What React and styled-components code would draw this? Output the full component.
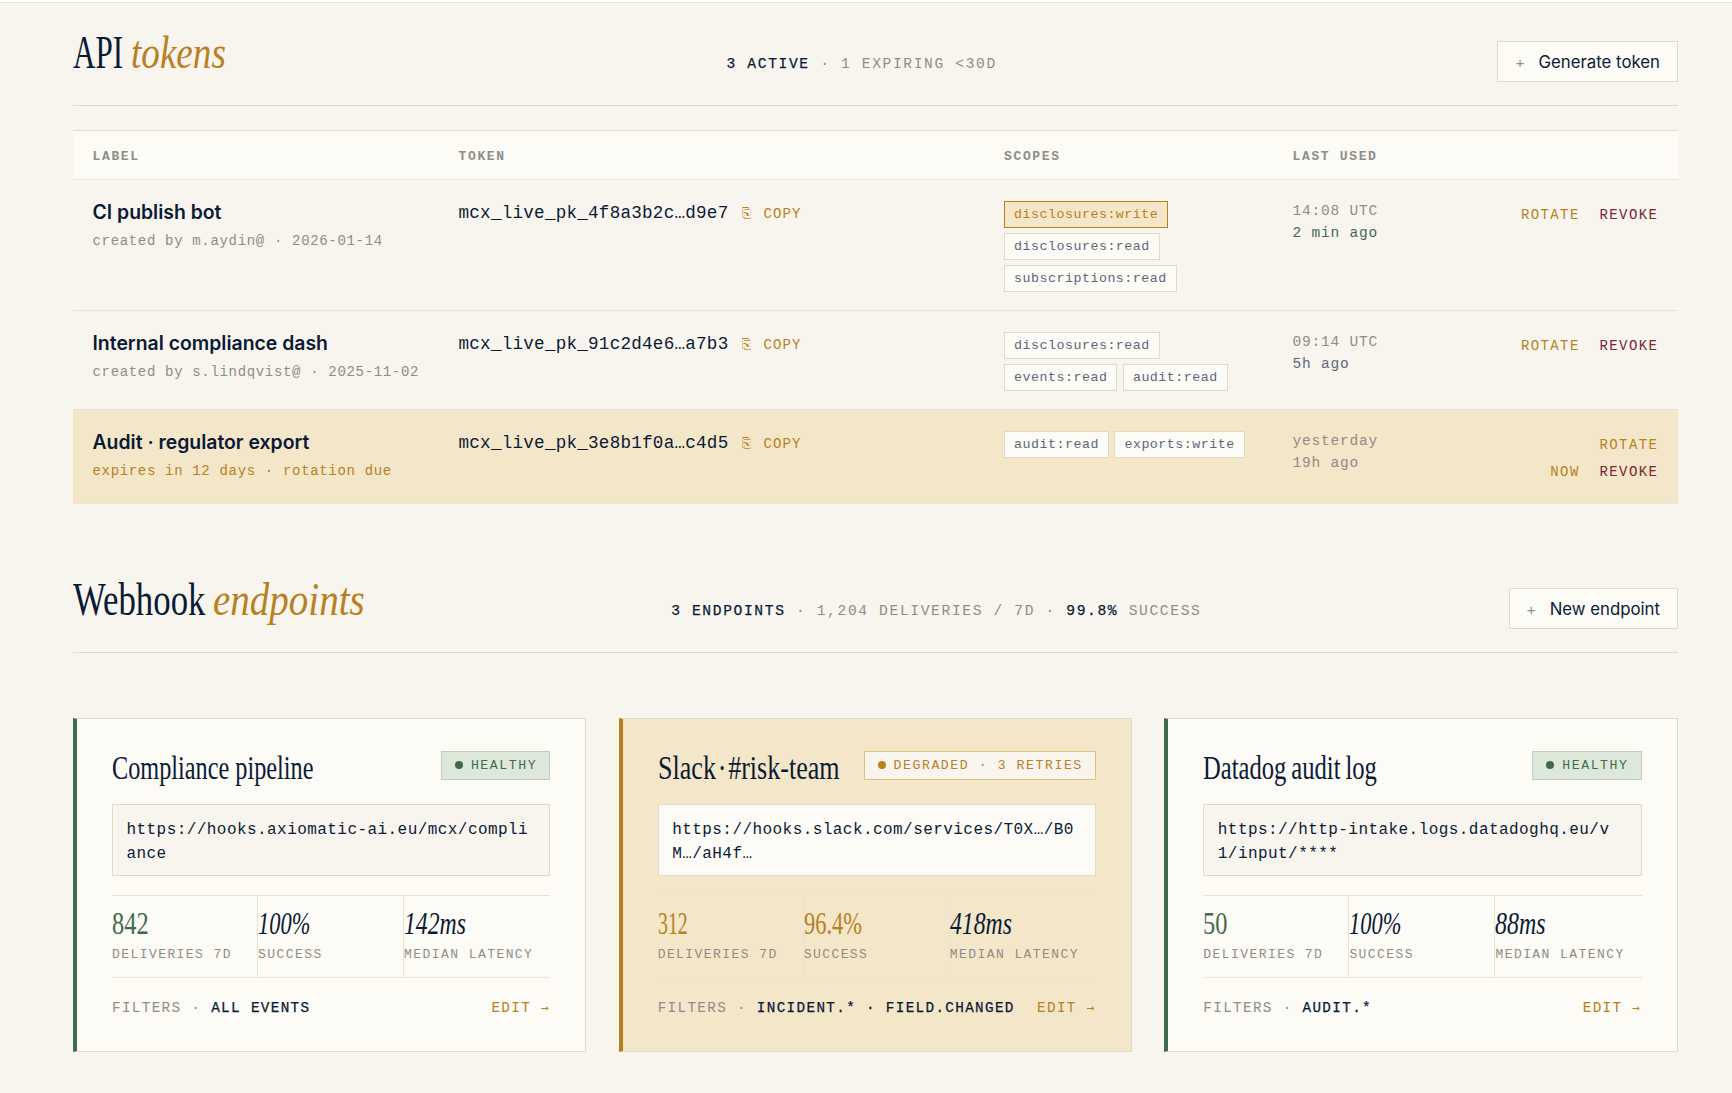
import React from 'react'
import styled, { createGlobalStyle } from 'styled-components'

const ink = '#0a1a35'
const amber = '#b8801f'
const amberSoft = '#f4e6c9'
const green = '#3f6b4c'
const red = '#7a2436'
const muted = '#8e8d86'
const slate = '#5d667c'
const page = '#f8f5ee'
const paper = '#fcfbf6'
const line = '#e1dac9'
const lineSoft = '#e9e3d5'

const mono = `'Liberation Mono', 'DejaVu Sans Mono', monospace`
const serif = `'Liberation Serif', serif`
const sans = `Inter, 'Liberation Sans', sans-serif`

const GlobalStyle = createGlobalStyle`
  * {
    box-sizing: border-box;
  }

  body {
    margin: 0;
    background: ${page};
    color: ${ink};
    font-family: ${sans};
  }
`

const Page = styled.main`
  height: 1093px;
  overflow: hidden;
  padding: 0 54.5px 0 73px;
  border-top: 2px solid #fff;
  box-shadow: inset 0 1px 0 #e9e7e2;
`

const SectionHead = styled.header`
  display: flex;
  justify-content: space-between;
  align-items: baseline;
  height: ${p => p.$height}px;
  padding-top: ${p => p.$top}px;
  border-bottom: 1px solid ${line};
`

const Title = styled.h2`
  display: flex;
  gap: ${p => p.$gap}px;
  margin: 0;
  font: 400 47px/47px ${serif};
`

const Narrow = styled.span`
  display: inline-block;
  width: ${p => p.$width ? `${p.$width}px` : 'auto'};
  white-space: nowrap;
  word-spacing: ${p => p.$words || 0}px;
  transform: scaleX(${p => p.$squeeze});
  transform-origin: 0 50%;
  color: ${p => p.$color || 'inherit'};
  font-style: ${p => p.$italic ? 'italic' : 'normal'};
`

// medium weight, between the regular and bold cuts of the mono
const Strong = styled.b`
  color: ${ink};
  font-weight: 400;
  -webkit-text-stroke: 0.25px ${ink};
`

const Summary = styled.div`
  color: ${muted};
  font: 14.6px/22px ${mono};
  letter-spacing: 1.64px;
  white-space: pre;
`

const Button = styled.button`
  display: flex;
  align-items: baseline;
  gap: 14px;
  height: 41px;
  padding: 9px 16.5px 0 17px;
  border: 1px solid ${line};
  background: ${paper};
  color: ${ink};
  font: 400 16.8px/22px ${sans};

  span {
    color: ${muted};
    font: 15px/22px ${mono};
  }
`

const Table = styled.div`
  margin: 24px 0 71px;
  border-top: 1px solid ${line};
`

const Row = styled.div`
  display: grid;
  grid-template-columns: 366px 545.5px 288.5px 176px 1fr;
  min-height: ${p => p.$head ? 49 : 94}px;
  padding-left: 19.5px;
  border-bottom: 1px solid ${lineSoft};
  background: ${p => p.$head ? paper : p.$warn ? amberSoft : 'transparent'};
`

const HeadCell = styled.div`
  padding-top: 16px;
  color: ${muted};
  font: 700 13px/20px ${mono};
  letter-spacing: 1.65px;
`

const Cell = styled.div`
  padding: 20px 20px 18.5px 0;
`

const Label = styled.div`
  padding-top: 1px;
  font: 600 19.4px/23.6px ${sans};
`

const Meta = styled.div`
  margin-top: 4.5px;
  color: ${p => p.$warn ? amber : muted};
  font: 14px/24px ${mono};
  letter-spacing: 0.67px;
  white-space: nowrap;
`

const Token = styled.div`
  display: flex;
  align-items: baseline;
  font: 17.6px/27px ${mono};
  letter-spacing: 0.24px;
`

const Copy = styled.span`
  margin-left: 14px;
  color: ${amber};
  font: 14px/20px ${mono};
  letter-spacing: 1.1px;
  white-space: pre;
`

const CopyGlyph = styled.span`
  display: inline-block;
  width: 11.5px;
  transform: scaleX(0.8);
  transform-origin: 0 50%;
`

const Scopes = styled.div`
  display: flex;
  flex-wrap: wrap;
  gap: 5px 5.5px;
  padding-top: 0.5px;
`

const Scope = styled.span`
  height: 27px;
  padding: 0.5px 9px 0;
  border: 1px solid ${p => p.$hot ? amber : line};
  background: ${p => p.$hot ? amberSoft : paper};
  color: ${p => p.$hot ? amber : slate};
  font: 13.3px/25px ${mono};
  letter-spacing: 0.51px;
`

const Used = styled.div`
  color: ${p => p.$color || muted};
  font: 14.5px/22.4px ${mono};
  letter-spacing: 0.8px;
`

const Actions = styled.div`
  padding: 21.5px 19.2px 17px 14px;
  font: 14px/27px ${mono};
  letter-spacing: 1.4px;
  text-align: right;
`

const Action = styled.a`
  margin-left: 10px;
  color: ${p => p.$danger ? red : amber};
`

const Cards = styled.div`
  display: grid;
  grid-template-columns: repeat(3, 1fr);
  gap: 32.5px;
  margin-top: 65px;
`

const Card = styled.article`
  height: 334px;
  padding: 32px 35px 0;
  border: 1px solid ${line};
  border-left: 4px solid ${p => p.$warn ? amber : green};
  background: ${p => p.$warn ? amberSoft : paper};
`

const CardHead = styled.div`
  display: flex;
  justify-content: space-between;
  align-items: flex-start;
  height: 32px;
`

const CardTitle = styled.h3`
  margin: 0;
  font: 400 33px/34px ${serif};
`

const Badge = styled.span`
  display: flex;
  align-items: center;
  gap: 8px;
  height: 29px;
  padding: 0 12px 0 13px;
  border: 1px solid ${p => p.$warn ? '#dfc07f' : '#b9cfb9'};
  background: ${p => p.$warn ? page : '#dde8db'};
  color: ${p => p.$warn ? amber : green};
  font: 13.2px/27px ${mono};
  letter-spacing: 1.55px;
  white-space: nowrap;

  &::before {
    content: '';
    width: 8px;
    height: 8px;
    margin-top: -1px;
    border-radius: 50%;
    background: currentColor;
  }
`

const Url = styled.div`
  height: 72px;
  margin-top: 21px;
  padding: 13px 13px 0 13.5px;
  border: 1px solid ${line};
  background: ${p => p.$warn ? paper : page};
  font: 16px/24.2px ${mono};
  letter-spacing: 0.44px;
  word-break: break-all;
`

const Stats = styled.div`
  display: grid;
  grid-template-columns: repeat(3, 1fr);
  height: 83px;
  margin-top: 19px;
  border-top: 1px solid ${lineSoft};
  border-bottom: 1px solid ${lineSoft};
`

const Stat = styled.div`
  padding-top: 11px;
  white-space: nowrap;

  &:not(:last-child) {
    border-right: 1px solid ${lineSoft};
  }
`

const Value = styled.div`
  font: 400 32.5px/33px ${serif};
`

const Caption = styled.div`
  margin-top: 5px;
  color: ${muted};
  font: 13px/20px ${mono};
  letter-spacing: 1.43px;
`

const CardFoot = styled.div`
  display: flex;
  justify-content: space-between;
  margin-top: 19px;
  color: ${muted};
  font: 14.3px/22px ${mono};
  letter-spacing: 1.34px;
  white-space: nowrap;

  a {
    color: ${amber};
  }
`

const Arrow = styled.span`
  display: inline-block;
  font: 13px/14px 'DejaVu Sans Mono', monospace;
`

const tokens = [
  {
    label: 'CI publish bot',
    meta: 'created by m.aydin@ · 2026-01-14',
    token: 'mcx_live_pk_4f8a3b2c…d9e7',
    scopes: ['disclosures:write', 'disclosures:read', 'subscriptions:read'],
    hot: 'disclosures:write',
    used: ['14:08 UTC', '2 min ago'],
    usedColor: green,
    rotate: ['ROTATE']
  },
  {
    label: 'Internal compliance dash',
    meta: 'created by s.lindqvist@ · 2025-11-02',
    token: 'mcx_live_pk_91c2d4e6…a7b3',
    scopes: ['disclosures:read', 'events:read', 'audit:read'],
    used: ['09:14 UTC', '5h ago'],
    usedColor: slate,
    rotate: ['ROTATE']
  },
  {
    label: 'Audit · regulator export',
    meta: 'expires in 12 days · rotation due',
    token: 'mcx_live_pk_3e8b1f0a…c4d5',
    scopes: ['audit:read', 'exports:write'],
    used: ['yesterday', '19h ago'],
    rotate: ['ROTATE', 'NOW'],
    warn: true
  }
]

const endpoints = [
  {
    name: 'Compliance pipeline',
    squeeze: 0.735,
    width: 201,
    status: 'HEALTHY',
    url: 'https://hooks.axiomatic-ai.eu/mcx/compliance',
    stats: [
      { value: '842', squeeze: 0.75, color: green, caption: 'DELIVERIES 7D' },
      { value: '100%', squeeze: 0.69, italic: true, caption: 'SUCCESS' },
      { value: '142ms', squeeze: 0.73, italic: true, caption: 'MEDIAN LATENCY' }
    ],
    filters: 'ALL EVENTS'
  },
  {
    name: 'Slack · #risk-team',
    squeeze: 0.79,
    words: -6,
    width: 181,
    status: 'DEGRADED · 3 RETRIES',
    url: 'https://hooks.slack.com/services/T0X…/B0M…/aH4f…',
    stats: [
      { value: '312', squeeze: 0.61, color: amber, caption: 'DELIVERIES 7D' },
      { value: '96.4%', squeeze: 0.69, color: amber, caption: 'SUCCESS' },
      { value: '418ms', squeeze: 0.73, italic: true, caption: 'MEDIAN LATENCY' }
    ],
    filters: 'INCIDENT.* · FIELD.CHANGED',
    warn: true
  },
  {
    name: 'Datadog audit log',
    squeeze: 0.745,
    words: -1.5,
    width: 173,
    status: 'HEALTHY',
    url: 'https://http-intake.logs.datadoghq.eu/v1/input/****',
    stats: [
      { value: '50', squeeze: 0.75, color: green, caption: 'DELIVERIES 7D' },
      { value: '100%', squeeze: 0.69, italic: true, caption: 'SUCCESS' },
      { value: '88ms', squeeze: 0.735, italic: true, caption: 'MEDIAN LATENCY' }
    ],
    filters: 'AUDIT.*'
  }
]

const TokenRow = ({ item }) => (
  <Row $warn={item.warn}>
    <Cell>
      <Label>{item.label}</Label>
      <Meta $warn={item.warn}>{item.meta}</Meta>
    </Cell>
    <Cell>
      <Token>
        {item.token}
        <Copy><CopyGlyph>⎘</CopyGlyph> COPY</Copy>
      </Token>
    </Cell>
    <Cell>
      <Scopes>
        {item.scopes.map(scope => (
          <Scope key={scope} $hot={scope === item.hot}>{scope}</Scope>
        ))}
      </Scopes>
    </Cell>
    <Cell>
      <Used>{item.used[0]}</Used>
      <Used $color={item.usedColor}>{item.used[1]}</Used>
    </Cell>
    <Actions>
      <Action>
        <span>{item.rotate[0]}</span>
        {item.rotate[1] && <><br /><span>{item.rotate[1]}</span></>}
      </Action>
      &nbsp;
      <Action $danger>REVOKE</Action>
    </Actions>
  </Row>
)

const EndpointCard = ({ item }) => (
  <Card $warn={item.warn}>
    <CardHead>
      <CardTitle>
        <Narrow $squeeze={item.squeeze} $width={item.width} $words={item.words}>
          {item.name}
        </Narrow>
      </CardTitle>
      <Badge $warn={item.warn}>{item.status}</Badge>
    </CardHead>
    <Url $warn={item.warn}>{item.url}</Url>
    <Stats>
      {item.stats.map(stat => (
        <Stat key={stat.caption}>
          <Value>
            <Narrow $squeeze={stat.squeeze} $color={stat.color} $italic={stat.italic}>
              {stat.value}
            </Narrow>
          </Value>
          <Caption>{stat.caption}</Caption>
        </Stat>
      ))}
    </Stats>
    <CardFoot>
      <span>FILTERS · <Strong>{item.filters}</Strong></span>
      <a>EDIT <Arrow>→</Arrow></a>
    </CardFoot>
  </Card>
)

const App = () => (
  <Page>
    <GlobalStyle />
    <SectionHead $height={104} $top={27}>
      <Title $gap={8}>
        <Narrow $squeeze={0.66} $width={50}>API</Narrow>
        <Narrow $squeeze={0.79} $width={95} $color={amber} $italic>tokens</Narrow>
      </Title>
      <Summary><Strong>3 ACTIVE</Strong> · 1 EXPIRING &lt;30D</Summary>
      <Button><span>+</span>Generate token</Button>
    </SectionHead>
    <Table>
      <Row $head>
        <HeadCell>LABEL</HeadCell>
        <HeadCell>TOKEN</HeadCell>
        <HeadCell>SCOPES</HeadCell>
        <HeadCell>LAST USED</HeadCell>
      </Row>
      {tokens.map(item => <TokenRow key={item.token} item={item} />)}
    </Table>
    <SectionHead $height={78} $top={1}>
      <Title $gap={7}>
        <Narrow $squeeze={0.74} $width={132.5}>Webhook</Narrow>
        <Narrow $squeeze={0.83} $width={151.5} $color={amber} $italic>endpoints</Narrow>
      </Title>
      <Summary><Strong>3 ENDPOINTS</Strong> · 1,204 DELIVERIES / 7D · <Strong>99.8%</Strong> SUCCESS</Summary>
      <Button><span>+</span>New endpoint</Button>
    </SectionHead>
    <Cards>
      {endpoints.map(item => <EndpointCard key={item.name} item={item} />)}
    </Cards>
  </Page>
)

export default App
